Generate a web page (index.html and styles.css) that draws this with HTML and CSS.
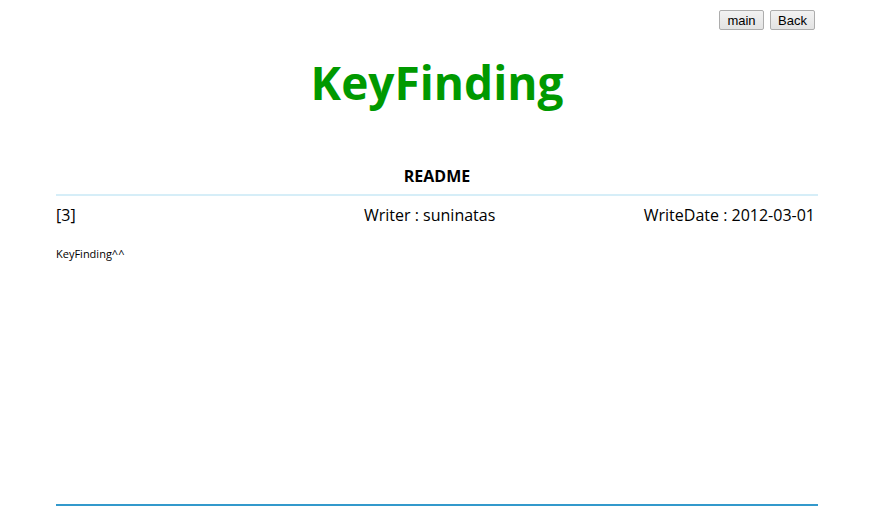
FILE: index.html
```html
<!DOCTYPE html>
<html>
<head>
<meta charset="utf-8">
<link rel="stylesheet" href="styles.css">
</head>
<body>
<div class="page">
  <div class="topbar">
    <button class="btn">main</button>
    <button class="btn">Back</button>
  </div>
  <h1 class="title">KeyFinding</h1>
  <div class="board">
    <div class="subject">README</div>
    <div class="meta">
      <span class="num">[3]</span>
      <span class="writer">Writer : suninatas</span>
      <span class="date">WriteDate : 2012-03-01</span>
    </div>
    <div class="content">KeyFinding^^</div>
  </div>
</div>
</body>
</html>
```
FILE: styles.css
```css
html, body { margin: 0; padding: 0; background: #fff; }
body { font-family: "Open Sans", "Noto Sans", sans-serif; color: #000; }
.page { width: 762px; margin-left: 56px; }
.topbar { display: flex; justify-content: flex-end; gap: 6px; padding-top: 10px; padding-right: 3px; }
.btn {
  font-family: "Liberation Sans", Arial, sans-serif; font-size: 13px;
  width: 45px; height: 20px; padding: 0; margin: 0;
  border: 1px solid #adadad; border-radius: 2px;
  background: linear-gradient(#f2f2f2, #e3e3e3); color: #000;
}
.title { margin: 21px 0 0; text-align: center; font-size: 46px; font-weight: 700; color: #009900; line-height: 62px; }
.board { margin-top: 52px; }
.subject { text-align: center; font-weight: 700; font-size: 16px; line-height: 22px; padding-bottom: 7px; border-bottom: 2px solid #d6eef8; }
.meta { display: grid; grid-template-columns: 308px auto 1fr; align-items: center; font-size: 16px; line-height: 22px; padding: 8px 3px 0 0; }
.date { text-align: right; }
.content { font-size: 11px; padding-top: 20px; height: 258px; border-bottom: 2px solid #3399cc; }
```
